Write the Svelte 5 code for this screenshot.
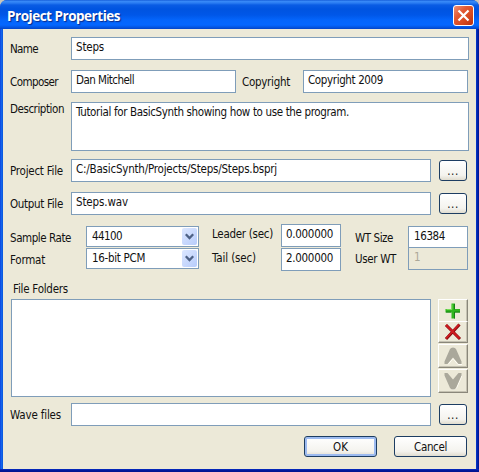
<script>
  // Spreads a text's letter spacing so that it takes the given width in pixels.
  function fit(node, width) {
    node.style.letterSpacing = '0px';
    const natural = node.getBoundingClientRect().width;
    node.style.letterSpacing = (width - natural) / node.textContent.length + 'px';
  }
  const files = [
    { label: 'Project File', lw: 53, value: 'C:/BasicSynth/Projects/Steps/Steps.bsprj', vw: 201 },
    { label: 'Output File', lw: 53, value: 'Steps.wav', vw: 52 }
  ];
  const selects = [
    { value: '44100', w: 30 },
    { value: '16-bit PCM', w: 53 }
  ];
</script>

{#snippet t(text, w)}<span class="t" use:fit={w}>{text}</span>{/snippet}

<div class="window">
  <header>
    <h1><span class="t" use:fit={113}>Project Properties</span></h1>
    <button class="close" aria-label="Close">
      <svg width="21" height="21" viewBox="0 0 21 21"><path d="M5.500 5.500l10 10M15.500 5.500l-10 10" stroke="#fff" stroke-width="2.2" /></svg>
    </button>
  </header>
  <main>
    <div class="row name">
      <label>{@render t('Name', 28)}</label>
      <div class="field">{@render t('Steps', 28)}</div>
    </div>
    <div class="row composer">
      <label>{@render t('Composer', 48)}</label>
      <div class="field half">{@render t('Dan Mitchell', 58)}</div>
      <label class="copy">{@render t('Copyright', 48)}</label>
      <div class="field half">{@render t('Copyright 2009', 75)}</div>
    </div>
    <div class="row desc">
      <label>{@render t('Description', 54)}</label>
      <div class="field area">{@render t('Tutorial for BasicSynth showing how to use the program.', 273)}</div>
    </div>
    {#each files as f}
      <div class="row file">
        <label>{@render t(f.label, f.lw)}</label>
        <div class="field">{@render t(f.value, f.vw)}</div>
        <button class="btn browse">...</button>
      </div>
    {/each}
    <div class="settings">
      <div class="names rate">
        <label>{@render t('Sample Rate', 61)}</label>
        <label>{@render t('Format', 35)}</label>
      </div>
      <div class="selects">
        {#each selects as s}
          <div class="select">
            {@render t(s.value, s.w)}
            <i><svg width="15" height="17" viewBox="0 0 15 17"><path d="M3.8 6.3l3.7 3.7 3.7-3.7" fill="none" stroke="#4d6185" stroke-width="2.3" /></svg></i>
          </div>
        {/each}
      </div>
      <div class="names secs">
        <label>{@render t('Leader (sec)', 61)}</label>
        <label>{@render t('Tail (sec)', 44)}</label>
      </div>
      <div class="times">
        <div class="field">{@render t('0.000000', 47)}</div>
        <div class="field">{@render t('2.000000', 47)}</div>
      </div>
      <div class="names wt">
        <label>{@render t('WT Size', 38)}</label>
        <label>{@render t('User WT', 41)}</label>
      </div>
      <div class="tables">
        <div class="field">{@render t('16384', 31)}</div>
        <div class="field off">{@render t('1', 6)}</div>
      </div>
    </div>
    <div class="caption">{@render t('File Folders', 55)}</div>
    <div class="folders">
      <div class="list"></div>
      <div class="tools">
        <button class="tool a" aria-label="Add"><svg width="16" height="16" viewBox="0 0 16 16"><path d="M6.500 0.500h3.500v5.500h5v3.500h-5v6H6.500v-6H0.500V6h6z" fill="#2fb51e" /><path d="M9.500 1v5.500M15 9H9.500v6.500M1 9h5" fill="none" stroke="#168015" /><path d="M7 1.500v5H1.500" fill="none" stroke="#77dc58" /></svg></button>
        <button class="tool b" aria-label="Remove"><svg width="18" height="18" viewBox="0 0 18 18"><path d="M2 2l14 14M15.500 1.500L2 16" stroke="#87090d" stroke-width="3" /><path d="M2 2l13.500 13.500M15 1.500L2 15.500" stroke="#cf1b20" stroke-width="1.800" /></svg></button>
        <button class="tool c" aria-label="Up"><svg width="18" height="18" viewBox="0 0 18 18"><path d="M4 17.500L9 11.500l5 6H18" fill="none" stroke="#fffdf5" /><path d="M.500 17v-2.500L6 2q1-1.500 3-1.500T12 2l5.500 12.500V17h-3L9 10.500 3.500 17z" fill="#aaa89b" /></svg></button>
        <button class="tool d" aria-label="Down"><svg width="18" height="18" viewBox="0 0 18 18"><path d="M18 3.500L12.500 16Q9 19 6.500 16.500" fill="none" stroke="#fffdf5" /><path d="M.500 1v2.500L6 16q1 1.500 3 1.500t3-1.500l5.500-12.500V1h-3L9 7.500 3.500 1z" fill="#aaa89b" /></svg></button>
      </div>
    </div>
    <div class="row file wave">
      <label>{@render t('Wave files', 51)}</label>
      <div class="field"></div>
      <button class="btn browse">...</button>
    </div>
    <footer>
      <button class="btn ok">{@render t('OK', 15)}</button>
      <button class="btn">{@render t('Cancel', 33)}</button>
    </footer>
  </main>
</div>

<style>
  :global(body) { margin: 0; background: #c9c6bb; }
  * { box-sizing: border-box; }
  .window {
    width: 479px; height: 472px; display: flex; flex-direction: column;
    background:
      linear-gradient(#0a35d0, #0019a0 1px, #00138c) bottom / 100% 3px no-repeat,
      linear-gradient(90deg, #0831d9 0, #166aee 1px, #0855dd 3px, #0855dd 470px, #0439d0 476px, #001ea0 478px, #00138c);
    border-radius: 7px 7px 0 0; overflow: hidden;
    font: 11.5px/14px "DejaVu Sans Condensed", "DejaVu Sans", sans-serif; font-stretch: condensed; color: #111;
  }
  header {
    height: 29px; flex: none; display: flex; justify-content: space-between; padding: 5px 5px 0 7px;
    background: linear-gradient(#0a4fd0 0, #3b8cf8 1px, #2a7cf2 3px, #0a5ce4 5px, #0054e0 9px, #0057e8 15px, #0465fb 20px, #0467ff 25px, #0458e5 27px, #0244c8 29px);
  }
  h1 { margin: 3px 0 0; font: bold 13.5px/17px "Open Sans", "Noto Sans", sans-serif; color: #fff; text-shadow: 1px 1px 1px #0b2a88; }
  .t { white-space: pre; display: inline-block; }
  button { padding: 0; font: inherit; color: inherit; }
  .close { width: 21px; height: 21px; border: 1px solid #fff; border-radius: 3px; background: linear-gradient(135deg, #ee9278, #e25a35 35%, #d84a20 65%, #b83010); display: grid; place-items: center; }
  .close svg { flex: none; margin: -1px; }
  main { margin: 0 3px; height: 440px; padding: 8px 5px 0 7px; background: #ece9d8; display: flex; flex-direction: column; }
  .row { display: flex; height: 23px; margin-bottom: 10px; flex: none; }
  label { display: block; width: 61px; height: 14px; flex: none; margin-top: 5px; }
  .field { flex: 1; height: 23px; border: 1px solid #7f9db9; background: #fff; padding: 2px 0 0 4px; }
  .name .field, .desc .field { flex: none; width: 398px; }
  .half { flex: none; width: 165px; }
  .composer { margin-bottom: 9px; }
  .copy { width: 67px; padding-left: 6px; }
  .desc { height: 49px; margin-bottom: 8px; }
  .desc label { margin-top: 0; }
  .area { height: 49px; }
  .file .field { flex: none; width: 360px; }
  .btn { border: 1px solid #1d3d62; border-radius: 3px; height: 21px; width: 73px; background: linear-gradient(#fff, #f4f3ee 75%, #e0dccf); display: flex; align-items: center; justify-content: center; }
  .browse { width: 28px; margin: 1px 0 0 8px; letter-spacing: .5px; padding-top: 1px; }
  .settings { display: flex; height: 47px; margin-top: -1px; flex: none; }
  .names { display: flex; flex-direction: column; flex: none; }
  .names label { width: auto; margin: 0; }
  .rate { width: 76px; padding-top: 7px; gap: 8px; }
  .secs { width: 82px; padding: 3px 0 0 13px; gap: 10px; }
  .wt { width: 67px; padding: 7px 0 0 14px; gap: 7px; }
  .selects { width: 113px; padding-top: 2px; display: grid; grid-template-rows: 21px 21px; row-gap: 1px; }
  .select { display: flex; justify-content: space-between; border: 1px solid #7f9db9; background: #fff; padding: 1px 1px 1px 5px; }
  i { width: 15px; height: 17px; border-radius: 2px; background: linear-gradient(135deg, #dce7ff, #b7ccfb); display: block; }
  i svg { display: block; }
  .select > :global(.t) { margin-top: 1px; }
  .times { width: 60px; display: flex; flex-direction: column; gap: 1px; }
  .times .field { flex: none; }
  .tables { width: 60px; padding-top: 2px; }
  .tables .field { height: 21px; border-bottom: 0; padding-left: 5px; }
  .tables .off { height: 23px; border-bottom: 1px solid #7f9db9; background: #ece9d8; color: #aca899; }
  .caption { margin: 11px 0 3px 3px; height: 14px; }
  .folders { display: flex; height: 98px; flex: none; margin-left: 1px; }
  .list { width: 420px; height: 98px; border: 1px solid #7f9db9; background: #fff; flex: none; }
  .tools { margin-left: 7px; width: 30px; display: flex; flex-direction: column; }
  .tool { height: 24px; flex: none; border: 1px solid; border-color: #fff #8a877a #8a877a #fff; box-shadow: inset -1px -1px #c5c2b2; background: #ece9d8; display: grid; place-items: center; }
  .a { height: 22px; border-bottom: 0; box-shadow: inset -1px 0 #c5c2b2; }
  .b { height: 22px; margin-bottom: 1px; }
  .d { margin-top: 1px; }
  .wave { margin: 6px 0 10px; }
  footer { display: flex; gap: 17px; margin-left: 294px; }
  .ok { box-shadow: inset 0 0 0 2px #9dbbf0; }
</style>
